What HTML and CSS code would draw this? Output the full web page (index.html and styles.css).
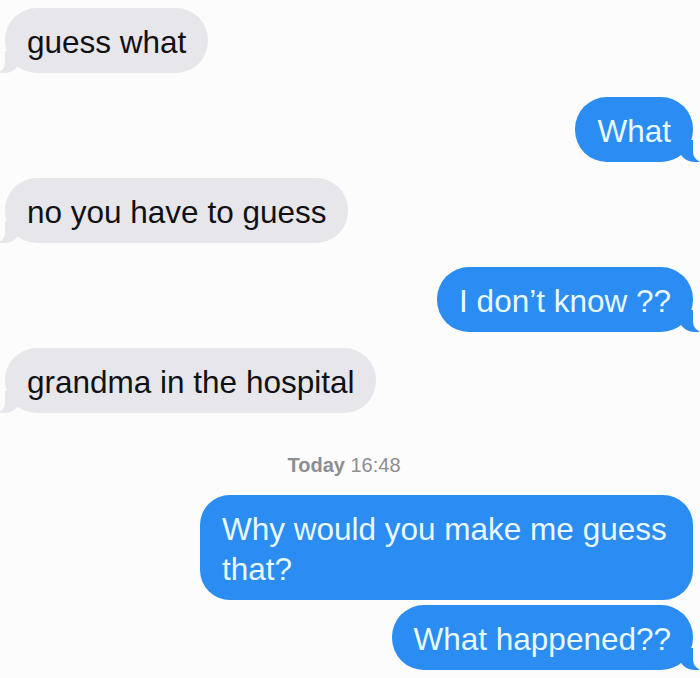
FILE: index.html
```html
<!DOCTYPE html>
<html lang="en">
<head>
<meta charset="utf-8">
<title>Messages</title>
<link rel="stylesheet" href="styles.css">
</head>
<body>
<div class="chat">
  <div class="msg left">guess what</div>
  <div class="msg right">What</div>
  <div class="msg left">no you have to guess</div>
  <div class="msg right">I don’t know ??</div>
  <div class="msg left">grandma in the hospital</div>
  <div class="stamp"><b>Today</b> 16:48</div>
  <div class="msg right wide no-tail">Why would you make me guess that?</div>
  <div class="msg right tight">What happened??</div>
</div>
</body>
</html>
```
FILE: styles.css
```css
html, body {
  margin: 0;
  padding: 0;
  background: #fcfcfc;
}

.chat {
  display: flex;
  flex-direction: column;
  padding: 8px 7px 0 5px;
  font-family: "Liberation Sans", Arial, Helvetica, sans-serif;
  font-size: 31.5px;
  line-height: 40px;
}

.msg {
  position: relative;
  padding: 14px 22px 11px 22px;
  border-radius: 32px;
}

.msg::before,
.msg::after {
  content: "";
  position: absolute;
  bottom: 0;
}

.left {
  align-self: flex-start;
  background: #e6e6eb;
  color: #111114;
  margin-top: 16px;
}

.left:first-child {
  margin-top: 0;
}

.left::before {
  left: -5px;
  width: 20px;
  height: 22px;
  background: #e6e6eb;
  border-bottom-right-radius: 16px 14px;
  z-index: 0;
}

.left::after {
  left: -10px;
  width: 10px;
  height: 22px;
  background: #fcfcfc;
  border-bottom-right-radius: 10px;
  z-index: 1;
}

.right {
  align-self: flex-end;
  background: #2b8cf2;
  color: #e8f9ff;
  margin-top: 24px;
}

.right::before {
  right: -6px;
  width: 20px;
  height: 22px;
  background: #2b8cf2;
  border-bottom-left-radius: 16px 14px;
  z-index: 0;
}

.right::after {
  right: -10px;
  width: 10px;
  height: 22px;
  background: #fcfcfc;
  border-bottom-left-radius: 10px;
  z-index: 1;
}

.no-tail::before,
.no-tail::after {
  display: none;
}

.wide {
  max-width: 449px;
  border-radius: 30px;
}

.tight {
  margin-top: 5px;
}

.stamp {
  margin-top: 40px;
  padding-right: 10px;
  text-align: center;
  font-size: 20px;
  line-height: 24px;
  color: #8d8d92;
}

.stamp b {
  font-weight: bold;
}

.stamp + .msg {
  margin-top: 18px;
}
```
